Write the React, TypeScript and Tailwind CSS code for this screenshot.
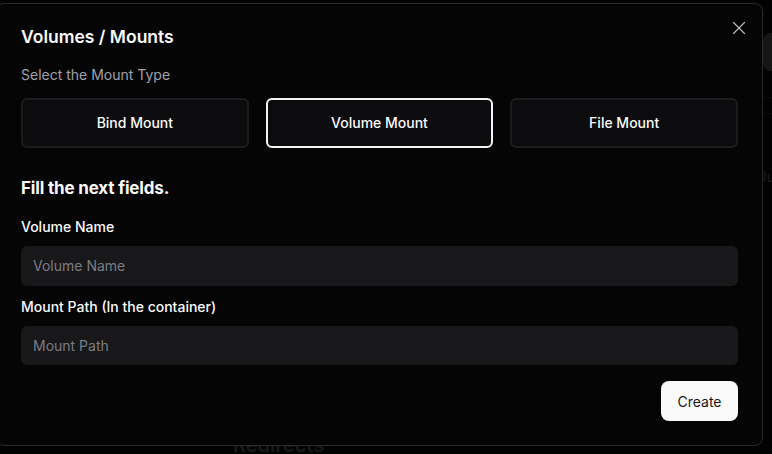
import { useState } from 'react'
import { X } from 'lucide-react'

type MountType = 'bind' | 'volume' | 'file'

const mountTypes: { id: MountType; label: string }[] = [
  { id: 'bind', label: 'Bind Mount' },
  { id: 'volume', label: 'Volume Mount' },
  { id: 'file', label: 'File Mount' },
]

function BackgroundPage() {
  // the dimmed page that sits behind the dialog
  return (
    <div className="h-screen w-full overflow-hidden bg-[#0a0a0a] flex">
      <div className="w-[233px] shrink-0" />
      <div className="flex-1 flex flex-col pt-[430px]">
        <div className="text-[20px] font-semibold text-[#7a7a7a]">Redirects</div>
      </div>
      <div className="w-[9px] shrink-0 flex flex-col pt-[33px]">
        <div className="h-[38px] w-[9px] rounded-l-lg bg-[#6b6b6b]" />
        <div className="mt-[26px] border-t border-[#3a3a3a]" />
        <div className="mt-[15px] border-t border-[#3a3a3a]" />
        <div className="mt-[52px] text-[14px] text-[#8a8a8a]">lu</div>
      </div>
    </div>
  )
}

export default function App() {
  const [mountType, setMountType] = useState<MountType>('volume')

  return (
    <div className="relative h-screen w-full overflow-hidden" style={{ fontFamily: 'Inter, "Noto Sans", sans-serif' }}>
      <BackgroundPage />
      <div className="fixed inset-0 bg-black/80" />
      <div className="fixed left-[-4px] top-[3px] w-[767px] h-[443px] rounded-lg border border-[#2a2a2a] bg-[#050505] pl-[24px] pr-[24px] pt-[19px] pb-[24px] flex flex-col">
        <button
          type="button"
          className="absolute right-[12px] top-[13px] text-[#d4d4d8] opacity-90 hover:opacity-100"
        >
          <X size={22} strokeWidth={1.25} />
        </button>

        <h2 className="text-[17.5px] leading-7 font-semibold text-[#fafafa]">Volumes / Mounts</h2>
        <p className="mt-[14px] text-[14px] leading-5 text-[#a1a1aa]">Select the Mount Type</p>

        <div className="mt-[13px] grid grid-cols-3 gap-[17px]">
          {mountTypes.map((m) => (
            <button
              key={m.id}
              type="button"
              onClick={() => setMountType(m.id)}
              className={
                mountType === m.id
                  ? 'h-[50px] rounded-md border-2 border-[#f4f4f5] bg-[#0c0c0e] pb-[2px] text-[14px] font-medium text-[#fafafa]'
                  : 'h-[50px] rounded-md border-2 border-[#1c1c1f] bg-[#0c0c0e] pb-[2px] text-[14px] font-medium text-[#fafafa]'
              }
            >
              {m.label}
            </button>
          ))}
        </div>

        <h3 className="mt-[26px] text-[17px] leading-7 font-bold text-[#fafafa] tracking-[-0.01em]">Fill the next fields.</h3>

        <label className="mt-[15px] text-[14px] leading-5 font-medium text-[#fafafa]">Volume Name</label>
        <input
          placeholder="Volume Name"
          className="mt-[9px] h-[40px] w-full rounded-md bg-[#18181b] px-3 text-[14px] text-[#fafafa] placeholder:text-[#7c7c84] outline-none"
        />

        <label className="mt-[11px] text-[14px] leading-5 font-medium text-[#fafafa]">Mount Path (In the container)</label>
        <input
          placeholder="Mount Path"
          className="mt-[9px] h-[40px] w-full rounded-md bg-[#18181b] px-3 text-[14px] text-[#fafafa] placeholder:text-[#7c7c84] outline-none"
        />

        <div className="mt-[16px] flex justify-end">
          <button
            type="button"
            className="h-[40px] w-[77px] rounded-lg bg-[#fafafa] text-[14px] text-[#18181b] hover:opacity-90"
          >
            Create
          </button>
        </div>
      </div>
    </div>
  )
}
